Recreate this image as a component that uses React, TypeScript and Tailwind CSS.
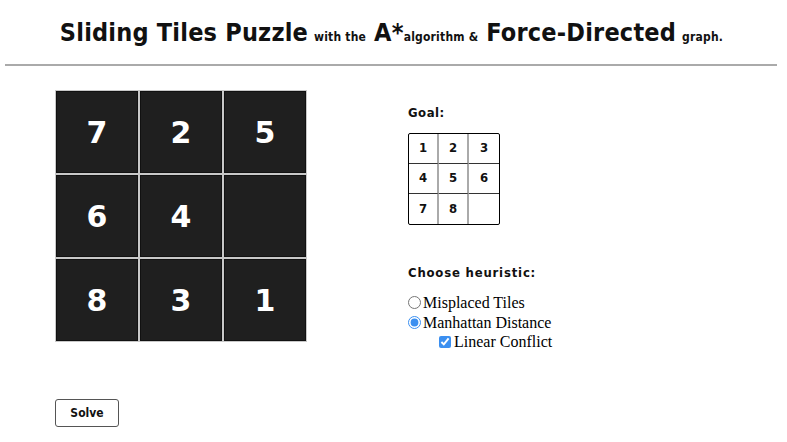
import { useState } from 'react';

const start = [7, 2, 5, 6, 4, 0, 8, 3, 1];
const goal = [1, 2, 3, 4, 5, 6, 7, 8, 0];

const display = { fontFamily: '"DejaVu Sans Condensed", "DejaVu Sans", sans-serif' };

export default function App() {
    const [heuristic, setHeuristic] = useState('manhattan');
    const [linear, setLinear] = useState(true);

    return (
        <div className="w-[787px] h-[442px] bg-white overflow-hidden">
            {/* HEADER */}
            <header className="pt-[14px] h-[64px] flex items-start justify-center pr-[4px]" style={display}>
                <h1 className="flex items-baseline text-[#111] whitespace-nowrap tracking-[0.2px]">
                    <span className="text-[25px] font-bold">Sliding Tiles Puzzle</span>
                    <span className="text-[12px] font-bold ml-[6px]">with the</span>
                    <span className="text-[25px] font-bold ml-[8px]">A*</span>
                    <span className="text-[12px] font-bold">algorithm &amp;</span>
                    <span className="text-[25px] font-bold ml-[8px]">Force-Directed</span>
                    <span className="text-[12px] font-bold ml-[6px]">graph.</span>
                </h1>
            </header>
            <div className="mx-[5px] mr-[10px] h-[2px] bg-[#aaa]" />

            <main className="flex pl-[55px] pt-[24px]">
                {/* puzzle board */}
                <div>
                    <div className="grid grid-cols-3 gap-[2px] bg-[#c8c8c8] w-[252px] h-[252px] p-[1px]">
                        {start.map((n, i) => (
                            <div key={i} className="bg-[#1f1f1f] border border-[#111] flex items-center justify-center text-white text-[30px] font-bold" style={{ fontFamily: '"DejaVu Sans", sans-serif' }}>
                                {n !== 0 ? n : ''}
                            </div>
                        ))}
                    </div>
                    <button className="mt-[57px] w-[64px] h-[28px] border border-[#555] rounded-[3px] text-[12px] font-bold text-[#111]" style={display}>
                        Solve
                    </button>
                </div>

                {/* side panel */}
                <div className="ml-[101px] pt-[13px]">
                    <h2 className="text-[13px] font-bold text-[#111] tracking-[0.5px]" style={display}>Goal:</h2>
                    <div className="mt-[10px] grid grid-cols-3 w-[92px] border border-black rounded-[2px]" style={display}>
                        {goal.map((n, i) => (
                            <div key={i} className={`h-[30px] flex items-center justify-center text-[13px] font-bold text-[#111] ${i % 3 !== 2 ? 'border-r-2 border-r-[#aaa]' : ''} ${i < 6 ? 'border-b border-b-[#333]' : ''}`}>
                                {n !== 0 ? n : ''}
                            </div>
                        ))}
                    </div>

                    <h2 className="mt-[38px] text-[13px] font-bold text-[#111] tracking-[0.8px]" style={display}>Choose heuristic:</h2>
                    <div className="mt-[11px] text-[16px] text-black leading-[19.5px]" style={{ fontFamily: '"Liberation Serif", serif' }}>
                        <label className="flex items-center">
                            <input type="radio" name="h" className="m-0 mr-[2px] w-[13px] h-[13px]" checked={heuristic === 'misplaced'} onChange={() => setHeuristic('misplaced')} />
                            Misplaced Tiles
                        </label>
                        <label className="flex items-center">
                            <input type="radio" name="h" className="m-0 mr-[2px] w-[13px] h-[13px] accent-[#3b8ff0]" checked={heuristic === 'manhattan'} onChange={() => setHeuristic('manhattan')} />
                            Manhattan Distance
                        </label>
                        <label className="flex items-center pl-[31px]">
                            <input type="checkbox" className="m-0 mr-[3px] w-[12px] h-[12px] accent-[#3b8ff0]" checked={linear} onChange={() => setLinear(!linear)} />
                            Linear Conflict
                        </label>
                    </div>
                </div>
            </main>
        </div>
    );
}
